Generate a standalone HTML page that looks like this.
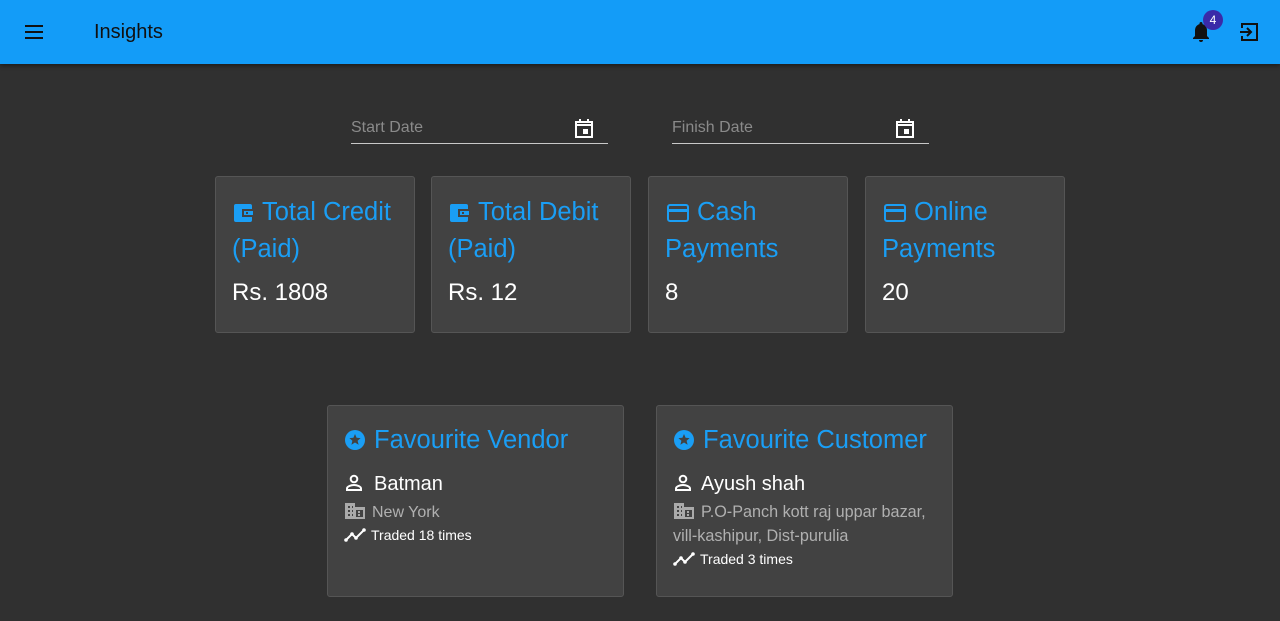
<!DOCTYPE html>
<html><head><meta charset="utf-8"><style>
*{box-sizing:border-box;margin:0;padding:0}
body{width:1280px;height:621px;background:#303030;font-family:"Liberation Sans",sans-serif;overflow:hidden;position:relative}
.bar{position:absolute;left:0;top:0;width:1280px;height:64px;background:#139cf8;box-shadow:0 2px 4px rgba(0,0,0,.4)}
.bar .t{position:absolute;left:94px;top:21px;font-size:20px;color:#111}
.field{position:absolute;top:110px;width:257px;height:34px;border-bottom:1px solid #c8c8c8}
.field span{position:absolute;left:0;top:9px;font-size:16px;color:#8a8a8a}
.field svg{position:absolute;right:14px;top:7px}
.card{position:absolute;background:#424242;border:1px solid #555;border-radius:3px}
.st{top:176px;width:200px;height:157px}
.st .h{position:absolute;left:16px;top:17px;width:180px;font-size:25.5px;line-height:37px;color:#1a9ef5}
.st .h svg{vertical-align:-2px;margin-right:8px;margin-left:2px}
.st .v{position:absolute;left:16px;top:102px;font-size:24px;color:#fff}
.fav{top:405px;width:297px;height:192px}
.fav .h{position:absolute;left:16px;top:20px;font-size:25.5px;color:#1a9ef5;white-space:nowrap}
.fav .h svg{vertical-align:-3px;margin-right:8px}
.row{position:absolute;left:16px;color:#fff;white-space:nowrap}
</style></head><body>
<div class="bar">
<svg style="position:absolute;left:24px;top:24px" width="20" height="16" viewBox="0 0 20 16"><path d="M1 2h18M1 8h18M1 14h18" stroke="#111" stroke-width="2"/></svg>
<div class="t">Insights</div>
<svg style="position:absolute;left:1191px;top:21px" width="20" height="22" viewBox="0 0 20 22"><path d="M10 1c-1 0-1.5.7-1.5 1.5v.6C5.5 4 4 6.5 4 9.5V15l-2 2v1h16v-1l-2-2V9.5c0-3-1.5-5.5-4.5-6.4v-.6C11.5 1.7 11 1 10 1zM8 19a2 2 0 004 0z" fill="#111"/></svg>
<div style="position:absolute;left:1203px;top:10px;width:20px;height:20px;border-radius:50%;background:#3a2aa8;color:#fff;font-size:12px;text-align:center;line-height:20px">4</div>
<svg style="position:absolute;left:1239px;top:22px" width="20" height="20" viewBox="0 0 20 20"><path d="M3 6V2h15v16H3v-4" fill="none" stroke="#111" stroke-width="2"/><path d="M1 10h11M8 6l4 4-4 4" fill="none" stroke="#111" stroke-width="2"/></svg>
</div>

<div class="field" style="left:351px"><span>Start Date</span><svg width="20" height="22" viewBox="0 0 20 22"><path d="M2 5h16v15H2zM2 8h16" fill="none" stroke="#fff" stroke-width="2"/><path d="M6 2v4M14 2v4" stroke="#fff" stroke-width="2"/><rect x="9" y="12" width="5" height="5" fill="#fff"/></svg></div>
<div class="field" style="left:672px"><span>Finish Date</span><svg width="20" height="22" viewBox="0 0 20 22"><path d="M2 5h16v15H2zM2 8h16" fill="none" stroke="#fff" stroke-width="2"/><path d="M6 2v4M14 2v4" stroke="#fff" stroke-width="2"/><rect x="9" y="12" width="5" height="5" fill="#fff"/></svg></div>

<div class="card st" style="left:215px"><div class="h"><svg width="20" height="18" viewBox="0 0 20 18"><rect x="0" y="0" width="18" height="18" rx="2" fill="#1a9ef5"/><rect x="8" y="5" width="11" height="8" fill="#424242"/><rect x="10" y="7" width="9" height="4" fill="#1a9ef5"/><rect x="12" y="8" width="2" height="2" fill="#424242"/></svg>Total Credit (Paid)</div><div class="v">Rs. 1808</div></div>
<div class="card st" style="left:431px"><div class="h"><svg width="20" height="18" viewBox="0 0 20 18"><rect x="0" y="0" width="18" height="18" rx="2" fill="#1a9ef5"/><rect x="8" y="5" width="11" height="8" fill="#424242"/><rect x="10" y="7" width="9" height="4" fill="#1a9ef5"/><rect x="12" y="8" width="2" height="2" fill="#424242"/></svg>Total Debit (Paid)</div><div class="v">Rs. 12</div></div>
<div class="card st" style="left:648px"><div class="h"><svg width="22" height="18" viewBox="0 0 22 18"><rect x="1" y="1" width="20" height="16" rx="2" fill="none" stroke="#1a9ef5" stroke-width="2"/><rect x="1" y="5" width="20" height="3" fill="#1a9ef5"/></svg>Cash Payments</div><div class="v">8</div></div>
<div class="card st" style="left:865px"><div class="h"><svg width="22" height="18" viewBox="0 0 22 18"><rect x="1" y="1" width="20" height="16" rx="2" fill="none" stroke="#1a9ef5" stroke-width="2"/><rect x="1" y="5" width="20" height="3" fill="#1a9ef5"/></svg>Online Payments</div><div class="v">20</div></div>

<div class="card fav" style="left:327px">
<div class="h"><svg width="22" height="22" viewBox="0 0 22 22"><circle cx="11" cy="11" r="10" fill="#1a9ef5"/><path d="M11 5l1.6 3.8 4 .3-3 2.6 1 4-3.6-2.2-3.6 2.2 1-4-3-2.6 4-.3z" fill="#424242"/></svg>Favourite Vendor</div>
<div class="row" style="top:67px;font-size:20px"><svg width="20" height="20" viewBox="0 0 20 20" style="vertical-align:-3px;margin-right:10px"><circle cx="10" cy="6" r="3.3" fill="none" stroke="#fff" stroke-width="2"/><path d="M3 17v-1.5c0-2 4-3.5 7-3.5s7 1.5 7 3.5V17z" fill="none" stroke="#fff" stroke-width="2"/></svg>Batman</div>
<div class="row" style="top:96px;font-size:16px;color:#b0b0b0"><svg width="22" height="18" viewBox="0 0 22 18" style="vertical-align:-3px;margin-right:6px"><path d="M1 1h10v4h10v12H1z" fill="#aaa"/><path d="M4 4h2v2H4zM8 4h1v2H8zM4 8h2v2H4zM8 8h1v2H8zM4 12h2v2H4zM8 12h1v2H8zM12 8h7v7h-7z" fill="#424242"/><path d="M14 9h2v2h-2zM14 12h2v2h-2z" fill="#aaa"/></svg>New York</div>
<div class="row" style="top:121px;font-size:14px"><svg width="22" height="14" viewBox="0 0 22 14" style="vertical-align:-2px;margin-right:5px"><path d="M2 12l6-6 4 4 8-8" fill="none" stroke="#fff" stroke-width="2"/><circle cx="2" cy="12" r="1.8" fill="#fff"/><circle cx="8" cy="6" r="1.8" fill="#fff"/><circle cx="12" cy="10" r="1.8" fill="#fff"/><circle cx="20" cy="2" r="1.8" fill="#fff"/></svg>Traded 18 times</div>
</div>

<div class="card fav" style="left:656px">
<div class="h"><svg width="22" height="22" viewBox="0 0 22 22"><circle cx="11" cy="11" r="10" fill="#1a9ef5"/><path d="M11 5l1.6 3.8 4 .3-3 2.6 1 4-3.6-2.2-3.6 2.2 1-4-3-2.6 4-.3z" fill="#424242"/></svg>Favourite Customer</div>
<div class="row" style="top:67px;font-size:20px"><svg width="20" height="20" viewBox="0 0 20 20" style="vertical-align:-3px;margin-right:8px"><circle cx="10" cy="6" r="3.3" fill="none" stroke="#fff" stroke-width="2"/><path d="M3 17v-1.5c0-2 4-3.5 7-3.5s7 1.5 7 3.5V17z" fill="none" stroke="#fff" stroke-width="2"/></svg>Ayush shah</div>
<div class="row" style="font-size:16.2px;color:#b0b0b0;white-space:normal;width:275px;line-height:24px;top:94px"><svg width="22" height="18" viewBox="0 0 22 18" style="vertical-align:-3px;margin-right:6px"><path d="M1 1h10v4h10v12H1z" fill="#aaa"/><path d="M4 4h2v2H4zM8 4h1v2H8zM4 8h2v2H4zM8 8h1v2H8zM4 12h2v2H4zM8 12h1v2H8zM12 8h7v7h-7z" fill="#424242"/><path d="M14 9h2v2h-2zM14 12h2v2h-2z" fill="#aaa"/></svg>P.O-Panch kott raj uppar bazar, vill-kashipur, Dist-purulia</div>
<div class="row" style="top:145px;font-size:14px"><svg width="22" height="14" viewBox="0 0 22 14" style="vertical-align:-2px;margin-right:5px"><path d="M2 12l6-6 4 4 8-8" fill="none" stroke="#fff" stroke-width="2"/><circle cx="2" cy="12" r="1.8" fill="#fff"/><circle cx="8" cy="6" r="1.8" fill="#fff"/><circle cx="12" cy="10" r="1.8" fill="#fff"/><circle cx="20" cy="2" r="1.8" fill="#fff"/></svg>Traded 3 times</div>
</div>
</body></html>
